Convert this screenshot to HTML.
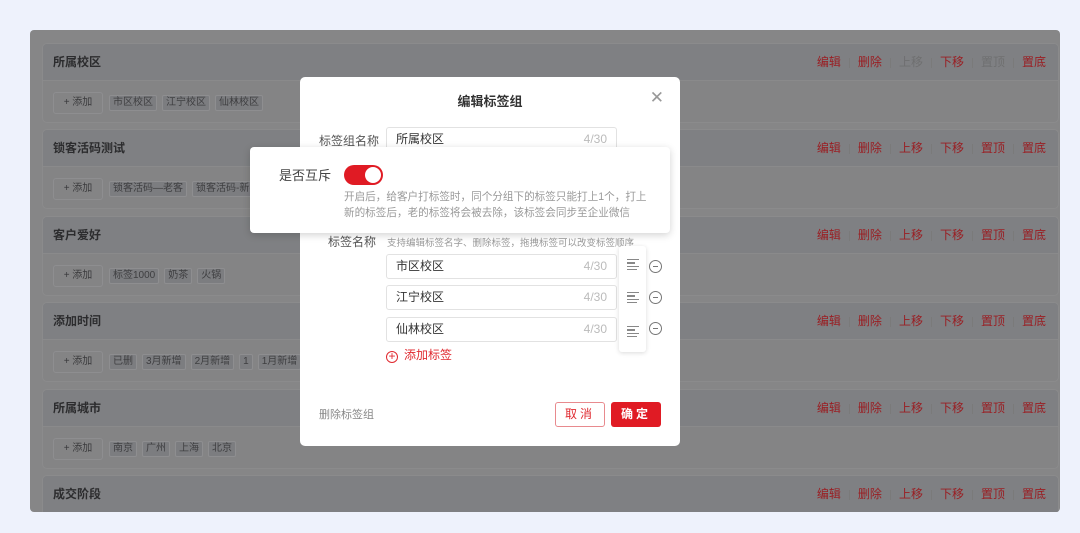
<!DOCTYPE html>
<html><head><meta charset="utf-8"><style>
*{box-sizing:border-box;margin:0;padding:0}
body{width:1080px;height:533px;background:#eef2fc;font-family:"Liberation Sans","Noto Sans CJK SC",sans-serif;position:relative;overflow:hidden}
.panel{position:absolute;left:30px;top:30px;width:1030px;height:482px;background:#868687;border-radius:4px;overflow:hidden}
.card{position:absolute;left:12px;width:1017px;height:80px;border:1px solid #8b8b8c;border-radius:5px;background:#848485;overflow:hidden}
.card .hd{height:37px;background:#7f8083;border-bottom:1px solid #8a8a8b;font-size:12px;font-weight:bold;color:#2c2c2e;line-height:36px;padding-left:10px}
.acts{position:absolute;right:12px;top:0;line-height:36px;font-size:12px;color:#9a1e23}
.acts span{margin-left:8px}
.acts i{display:inline-block;width:1px;height:10px;background:#7a7a7a;margin-left:8px;vertical-align:middle}
.acts .g{color:#6f6f70}
.bd{padding:11px 0 0 10px;font-size:10px;color:#3a3a3c}
.add{display:inline-block;width:50px;height:22px;border:1px solid #8e8e90;border-radius:3px;text-align:center;line-height:20px;margin-right:6px;vertical-align:middle}
.tg{display:inline-block;height:16px;line-height:14px;padding:0 3px;border:1px solid #8e8e90;background:#7c7d80;border-radius:2px;margin-right:5px;vertical-align:middle;color:#3e3e40}
.modal{position:absolute;left:300px;top:77px;width:380px;height:369px;background:#fff;border-radius:5px}
.pop{position:absolute;left:250px;top:147px;width:420px;height:86px;background:#fff;border-radius:4px;box-shadow:0 2px 8px rgba(0,0,0,.18)}
.inp{position:absolute;height:25px;border:1px solid #e2e2e2;border-radius:3px;font-size:12px;color:#333;line-height:23px;padding-left:9px}
.inp b{position:absolute;right:9px;font-weight:normal;color:#bbb}
.lbl{position:absolute;font-size:12px;color:#555}
.mi{position:absolute;left:649px;width:13px;height:13px;border:1.3px solid #777;border-radius:50%}
.mi:after{content:"";position:absolute;left:2.5px;top:5px;width:5.5px;height:1.3px;background:#777}
.dr{position:absolute;left:627px;width:12px}
.dr i{display:block;height:1.3px;background:#888;margin-bottom:2px}
</style></head><body>
<div class="panel">
 <div class="card" style="top:13px"><div class="hd">所属校区</div><div class="acts"><span>编辑</span><i></i><span>删除</span><i></i><span class="g">上移</span><i></i><span>下移</span><i></i><span class="g">置顶</span><i></i><span>置底</span></div><div class="bd"><span class="add">+ 添加</span><span class="tg">市区校区</span><span class="tg">江宁校区</span><span class="tg">仙林校区</span></div></div>
 <div class="card" style="top:99px"><div class="hd">锁客活码测试</div><div class="acts"><span>编辑</span><i></i><span>删除</span><i></i><span>上移</span><i></i><span>下移</span><i></i><span>置顶</span><i></i><span>置底</span></div><div class="bd"><span class="add">+ 添加</span><span class="tg">锁客活码—老客</span><span class="tg">锁客活码-新客</span></div></div>
 <div class="card" style="top:186px"><div class="hd">客户爱好</div><div class="acts"><span>编辑</span><i></i><span>删除</span><i></i><span>上移</span><i></i><span>下移</span><i></i><span>置顶</span><i></i><span>置底</span></div><div class="bd"><span class="add">+ 添加</span><span class="tg">标签1000</span><span class="tg">奶茶</span><span class="tg">火锅</span></div></div>
 <div class="card" style="top:272px"><div class="hd">添加时间</div><div class="acts"><span>编辑</span><i></i><span>删除</span><i></i><span>上移</span><i></i><span>下移</span><i></i><span>置顶</span><i></i><span>置底</span></div><div class="bd"><span class="add">+ 添加</span><span class="tg">已删</span><span class="tg">3月新增</span><span class="tg">2月新增</span><span class="tg">1</span><span class="tg">1月新增</span></div></div>
 <div class="card" style="top:359px"><div class="hd">所属城市</div><div class="acts"><span>编辑</span><i></i><span>删除</span><i></i><span>上移</span><i></i><span>下移</span><i></i><span>置顶</span><i></i><span>置底</span></div><div class="bd"><span class="add">+ 添加</span><span class="tg">南京</span><span class="tg">广州</span><span class="tg">上海</span><span class="tg">北京</span></div></div>
 <div class="card" style="top:445px"><div class="hd">成交阶段</div><div class="acts"><span>编辑</span><i></i><span>删除</span><i></i><span>上移</span><i></i><span>下移</span><i></i><span>置顶</span><i></i><span>置底</span></div></div>
</div>
<div class="modal">
 <div style="position:absolute;top:14px;width:100%;text-align:center;font-size:13px;font-weight:bold;color:#333">编辑标签组</div>
 <div style="position:absolute;right:16px;top:11px;font-size:17px;color:#999">✕</div>
 <div style="position:absolute;left:19px;top:329px;font-size:11px;color:#888">删除标签组</div>
 <div style="position:absolute;left:255px;top:325px;width:50px;height:25px;border:1px solid #e88a8e;border-radius:3px;color:#e02a30;font-size:12px;text-align:center;line-height:23px;letter-spacing:3px">取消</div>
 <div style="position:absolute;left:311px;top:325px;width:50px;height:25px;background:#e01b24;border-radius:3px;color:#fff;font-size:12px;text-align:center;line-height:25px;letter-spacing:3px;font-weight:bold">确定</div>
</div>
<div class="lbl" style="left:319px;top:132px">标签组名称</div>
<div class="inp" style="left:386px;top:127px;width:231px">所属校区<b>4/30</b></div>
<div class="lbl" style="left:328px;top:233px">标签名称</div>
<div style="position:absolute;left:387px;top:235px;font-size:9.5px;color:#999">支持编辑标签名字、删除标签，拖拽标签可以改变标签顺序</div>
<div class="inp" style="left:386px;top:254px;width:231px">市区校区<b>4/30</b></div>
<div class="inp" style="left:386px;top:285px;width:231px">江宁校区<b>4/30</b></div>
<div class="inp" style="left:386px;top:317px;width:231px">仙林校区<b>4/30</b></div>
<div style="position:absolute;left:619px;top:246px;width:27px;height:106px;background:#fff;border-radius:3px;box-shadow:0 1px 5px rgba(0,0,0,.15)"></div>
<div class="dr" style="top:259px"><i></i><i style="width:8px"></i><i></i><i style="width:10px"></i></div>
<div class="dr" style="top:292px"><i></i><i style="width:8px"></i><i></i><i style="width:10px"></i></div>
<div class="dr" style="top:326px"><i></i><i style="width:8px"></i><i></i><i style="width:10px"></i></div>
<div class="mi" style="top:260px"></div><div class="mi" style="top:291px"></div><div class="mi" style="top:322px"></div>
<div style="position:absolute;left:386px;top:346px;font-size:12px;color:#e02a30"><span style="display:inline-block;width:12px;height:12px;border:1.3px solid #e02a30;border-radius:50%;text-align:center;line-height:9px;font-size:12px;vertical-align:-1px;margin-right:6px">+</span>添加标签</div>
<div class="pop">
 <div style="position:absolute;left:29px;top:18px;font-size:13px;color:#444">是否互斥</div>
 <div style="position:absolute;left:94px;top:18px;width:39px;height:20px;background:#e01b24;border-radius:10px"><div style="position:absolute;right:2px;top:2px;width:16px;height:16px;background:#fff;border-radius:50%"></div></div>
 <div style="position:absolute;left:94px;top:42px;width:310px;font-size:10.6px;color:#999;line-height:16px">开启后，给客户打标签时，同个分组下的标签只能打上1个，打上新的标签后，老的标签将会被去除，该标签会同步至企业微信</div>
</div>
</body></html>
